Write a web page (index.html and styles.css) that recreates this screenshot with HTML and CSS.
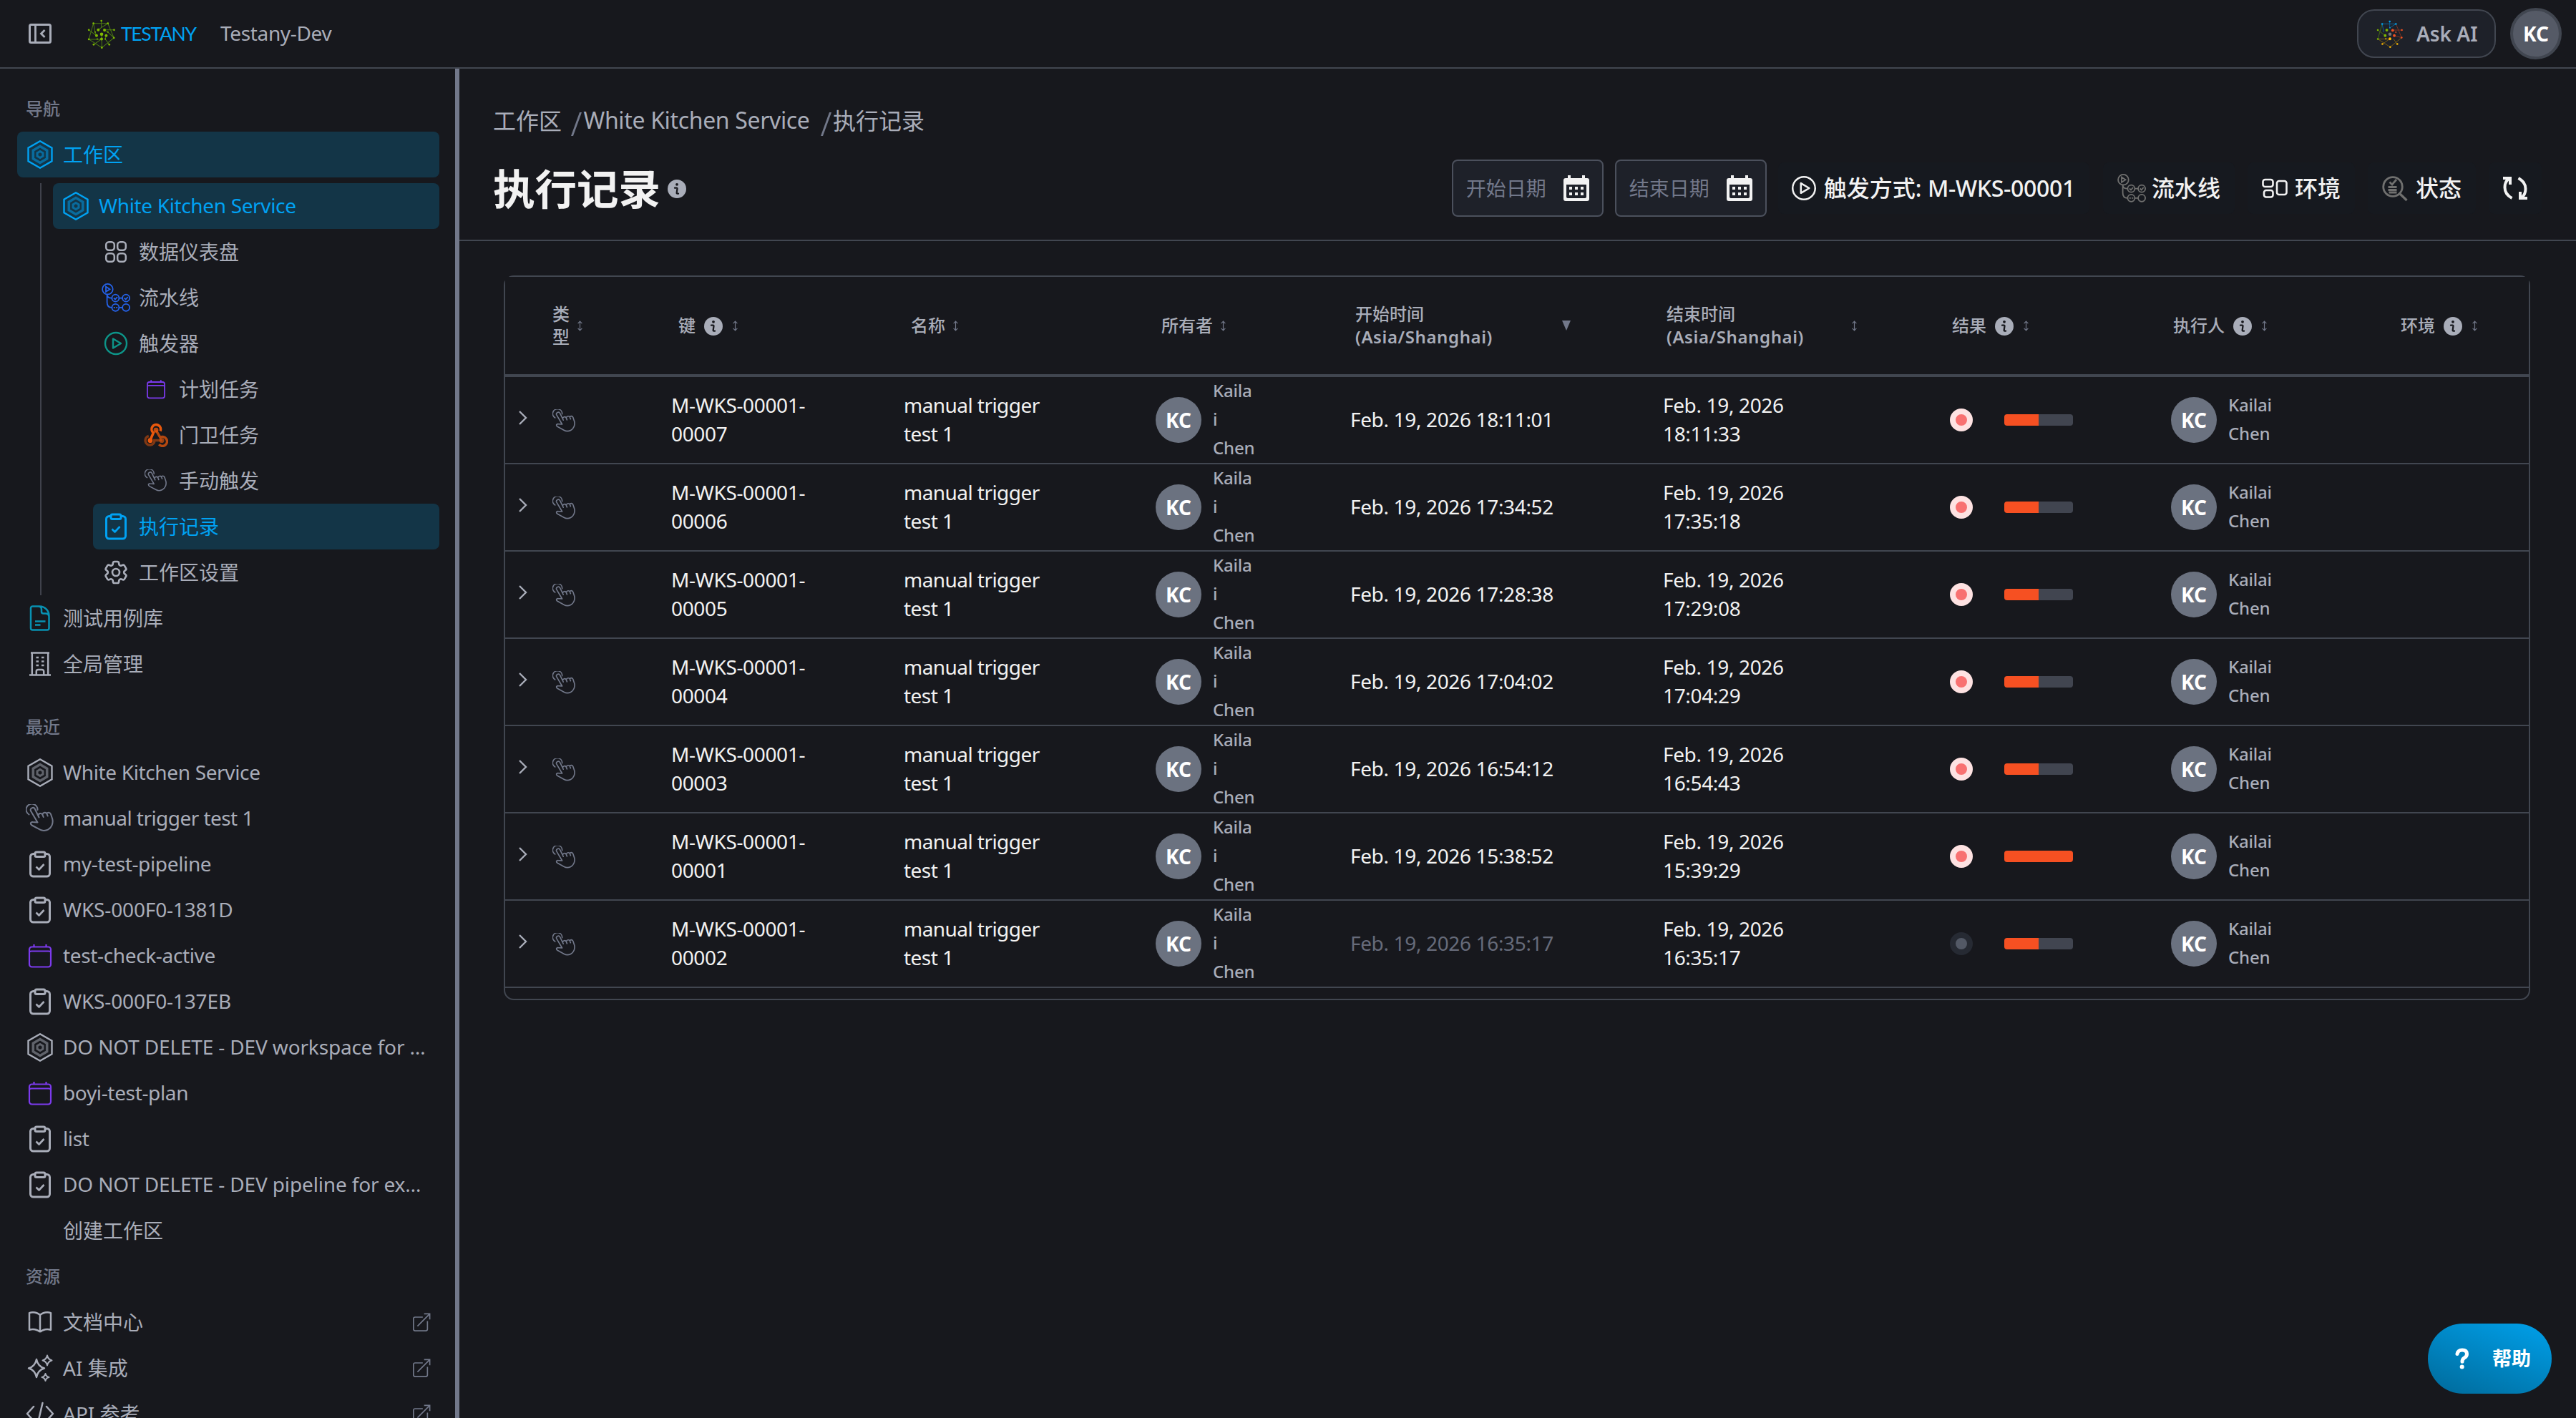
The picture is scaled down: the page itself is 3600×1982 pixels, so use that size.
FILE: index.html
```html
<!DOCTYPE html>
<html lang="zh-CN">
<head>
<meta charset="utf-8">
<title>执行记录 - Testany</title>
<link rel="stylesheet" href="styles.css">
</head>
<body>
<svg class="sprite" aria-hidden="true">
  <symbol id="hex" viewBox="0 0 40 40"><path d="M20 1.300 36.500 10.600v18.800L20 38.700 3.500 29.400V10.600z" fill="none" stroke="currentColor" stroke-width="2.400"/><path d="M20 8.500 29.700 14.200v11.600L20 31.500l-9.700-5.700V14.200z" fill="none" stroke="currentColor" stroke-width="3.600" opacity=".5"/><path d="M20 15.500l4 2.400v4.200l-4 2.400-4-2.400v-4.200z" fill="none" stroke="currentColor" stroke-width="3" opacity=".5"/></symbol>
  <symbol id="hand" viewBox="0 0 40 40"><path d="M4.500 14.500A8 8 0 1 1 16.500 8M16.500 25.500 7 9.500a3.200 3.200 0 0 1 5.800-2.700l5.700 11.700M17.500 16c0-3 4.500-4.500 6-1l1.200 3M23.500 14.500c.5-3 5-4 6.200-.5l1 2.500M29.500 13.200c1-2.200 4.500-2.200 5.500.8l2.200 6.500c1.500 6-1 12.500-6.200 15.200-3 1.500-8 1.800-11 0L8.500 29.500c-3-2.500-1.500-5 1.500-4.500l6.500.5" fill="none" stroke="currentColor" stroke-width="2" stroke-linecap="round" stroke-linejoin="round"/></symbol>
  <symbol id="clip" viewBox="0 0 40 40"><g fill="none" stroke="currentColor" stroke-width="3" stroke-linejoin="round"><path d="M13 5.500h-2.500a4 4 0 0 0-4 4v23.500a4 4 0 0 0 4 4h19a4 4 0 0 0 4-4V9.500a4 4 0 0 0-4-4H27"/><rect x="13" y="3" width="14" height="6.500" rx="2"/><path d="m14.500 23.500 4 4 7-7.500" stroke-width="2.600"/></g></symbol>
  <symbol id="cal" viewBox="0 0 40 40"><path d="M8.500 7.500h23a3.500 3.500 0 0 1 3.500 3.500v21a3.500 3.500 0 0 1-3.500 3.500h-23A3.500 3.500 0 0 1 5 32V11a3.500 3.500 0 0 1 3.500-3.500zM5 15c0-1 1-1.500 3-1.500h24c2 0 3 .5 3 1.500M11.500 7.500v-3.500M28.500 7.500v-3.500" fill="none" stroke="currentColor" stroke-width="2.200"/></symbol>
  <symbol id="grid" viewBox="0 0 40 40"><g fill="none" stroke="currentColor" stroke-width="2.500"><rect x="6.200" y="6.200" width="11.600" height="11.600" rx="4"/><rect x="22.200" y="6.200" width="11.600" height="11.600" rx="4"/><rect x="6.200" y="22.200" width="11.600" height="11.600" rx="4"/><rect x="22.200" y="22.200" width="11.600" height="11.600" rx="4"/></g></symbol>
  <symbol id="pipe" viewBox="0 0 40 40"><g fill="none" stroke="currentColor" stroke-width="1.800"><circle cx="8.400" cy="8.200" r="7.300"/><path d="M6 4.600v7.200l5.500-3.600zM7.600 15.500v11q0 7.300 6.400 7.300M7.600 16.500q1 4.200 6.400 4.200M24.700 20.700h4.600M24.700 33.800h4.600" /><circle cx="19.400" cy="20.700" r="5"/><circle cx="34.100" cy="20.700" r="5"/><circle cx="19.400" cy="33.800" r="5"/><circle cx="34.100" cy="33.800" r="5"/><path d="m17 20.500 2 2 3-3.500M31.700 20.500l2 2 3-3.500M16.800 33.800h2M20.200 33.800h2"/></g></symbol>
  <symbol id="play" viewBox="0 0 40 40"><g fill="none" stroke="currentColor" stroke-width="2.400" stroke-linejoin="round"><circle cx="20" cy="20" r="15"/><path d="M16 13.500v13L27 20z"/></g></symbol>
  <symbol id="hook" viewBox="0 0 40 40"><g fill="none" stroke="currentColor" stroke-width="4.200"><path d="M27.200 13.500a7.500 7.500 0 1 0-11.500 3l-5 11.500"/><path d="M20 12.500 27 24a7.500 7.500 0 1 1-2 11.500" opacity=".75"/><path d="M30 28.800H17.500a7.500 7.500 0 1 1-9.500-7" opacity=".5"/></g><g fill="currentColor"><circle cx="20" cy="12" r="4" opacity=".8"/><circle cx="10.500" cy="29" r="4"/><circle cx="29.500" cy="29" r="4" opacity=".6"/></g></symbol>
  <symbol id="gear" viewBox="0 0 24 24"><g fill="none" stroke="currentColor" stroke-width="1.600" stroke-linejoin="round"><path d="M9.594 3.940c.09-.542.560-.940 1.110-.940h2.593c.55 0 1.020.398 1.110.940l.213 1.281c.063.374.313.686.645.870.074.040.147.083.220.127.325.196.720.257 1.075.124l1.217-.456a1.125 1.125 0 0 1 1.370.490l1.296 2.247a1.125 1.125 0 0 1-.260 1.431l-1.003.827c-.293.241-.438.613-.430.992a7.723 7.723 0 0 1 0 .255c-.008.378.137.750.430.991l1.004.827c.424.350.534.955.260 1.430l-1.298 2.247a1.125 1.125 0 0 1-1.369.491l-1.217-.456c-.355-.133-.750-.072-1.076.124a6.470 6.470 0 0 1-.220.128c-.331.183-.581.495-.644.869l-.213 1.281c-.090.543-.560.940-1.110.940h-2.594c-.550 0-1.019-.398-1.110-.940l-.213-1.281c-.062-.374-.312-.686-.644-.870a6.520 6.520 0 0 1-.220-.127c-.325-.196-.720-.257-1.076-.124l-1.217.456a1.125 1.125 0 0 1-1.369-.490l-1.297-2.247a1.125 1.125 0 0 1 .260-1.431l1.004-.827c.292-.240.437-.613.430-.991a6.932 6.932 0 0 1 0-.255c.007-.380-.138-.751-.430-.992l-1.004-.827a1.125 1.125 0 0 1-.260-1.430l1.297-2.247a1.125 1.125 0 0 1 1.370-.491l1.216.456c.356.133.751.072 1.076-.124.072-.044.146-.086.220-.128.332-.183.582-.495.644-.869z"/><circle cx="12" cy="12" r="3"/></g></symbol>
  <symbol id="doc" viewBox="0 0 40 40"><g fill="none" stroke="currentColor" stroke-width="2.500" stroke-linejoin="round"><path d="M9.500 3.500h9.500c9 0 13.500 7 13.500 13.500v17a2.500 2.500 0 0 1-2.500 2.500H9.500A2.500 2.500 0 0 1 7 34V6a2.500 2.500 0 0 1 2.500-2.500zM17.500 3.500c3.500 0 4.500 1.500 4.500 4.500v3q0 2.500 2.500 2.500h3c3 0 4.500 1 5 4"/><path d="M13 24.500h14.500M13 29.500h7.500"/></g></symbol>
  <symbol id="build" viewBox="0 0 40 40"><g fill="none" stroke="currentColor" stroke-width="2.500"><path d="M7 4.500h26M8.800 4.500v31M31.200 4.500v31M5 35.500h30M14.800 35v-4.500a2.500 2.500 0 0 1 2.500-2.500h5.400a2.500 2.500 0 0 1 2.500 2.500V35"/><path d="M14.500 11h3.500M22 11h3.500M14.500 16.500h3.500M22 16.500h3.500M14.500 22h3.500M22 22h3.500"/></g></symbol>
  <symbol id="book" viewBox="0 0 24 24"><path d="M12 6.042A8.967 8.967 0 0 0 6 3.750c-1.052 0-2.062.180-3 .512v14.250A8.987 8.987 0 0 1 6 18c2.305 0 4.408.867 6 2.292m0-14.250a8.966 8.966 0 0 1 6-2.292c1.052 0 2.062.180 3 .512v14.250A8.987 8.987 0 0 0 18 18a8.967 8.967 0 0 0-6 2.292m0-14.250v14.250" fill="none" stroke="currentColor" stroke-width="1.500" stroke-linejoin="round"/></symbol>
  <symbol id="spark" viewBox="0 0 40 40"><g fill="none" stroke="currentColor" stroke-width="2.400" stroke-linejoin="round"><path d="M15 8q2 10 11 12.500Q17 23 15 33q-2-10-11-12.500Q13 18 15 8z"/><path d="M30 2.500q1 5.500 6.500 7-5.500 1.500-6.500 7-1-5.500-6.500-7 5.500-1.500 6.500-7zM27.500 28q.8 4 5 5-4.200 1-5 5-.8-4-5-5 4.200-1 5-5z" stroke-width="2"/></g></symbol>
  <symbol id="code" viewBox="0 0 40 40"><path d="M11 10 2 20l9 10M29 10l9 10-9 10M23.500 5l-7 30" fill="none" stroke="currentColor" stroke-width="2.500" stroke-linecap="round" stroke-linejoin="round"/></symbol>
  <symbol id="ext" viewBox="0 0 28 28"><path d="M16 6.500H4.500A2.500 2.500 0 0 0 2 9v15.500A2.500 2.500 0 0 0 4.500 27h16a2.500 2.500 0 0 0 2.500-2.500V12.500M8 20 26.500 1.500M18 1.500h8.500V10" fill="none" stroke="currentColor" stroke-width="1.800"/></symbol>
  <symbol id="info" viewBox="0 0 26 26"><circle cx="13" cy="13" r="13" fill="currentColor"/><circle cx="13" cy="6.800" r="1.900" fill="#17181d"/><path d="M10 11.700h2.600q1 0 .9 1l-.8 5.600q-.2 1.400 1 1.400h1.300" fill="none" stroke="#17181d" stroke-width="2.300" stroke-linecap="round"/></symbol>
  <symbol id="sort" viewBox="0 0 10 16"><path d="M5 1.200v13.600M1.800 4.200 5 1l3.200 3.200M1.800 11.800 5 15l3.200-3.200" fill="none" stroke="currentColor" stroke-width="1.300"/></symbol>
  <symbol id="chev" viewBox="0 0 14 22"><path d="m2 2 9 9-9 9" fill="none" stroke="currentColor" stroke-width="2.400"/></symbol>
  <symbol id="calfill" viewBox="0 0 36 36"><path fill="currentColor" fill-rule="evenodd" d="M6 0h4v4h16V0h4v4h3q3 0 3 3v26q0 3-3 3H3q-3 0-3-3V7q0-3 3-3h3zM4 13v17q0 2 2 2h24q2 0 2-2V13z"/><path fill="currentColor" d="M8 16h4v4H8zM16 16h4v4h-4zM24 16h4v4h-4zM8 24h4v4H8zM16 24h4v4h-4zM24 24h4v4h-4z"/></symbol>
</svg>

<header class="topbar">
  <svg class="toggle" viewBox="0 0 32 28"><rect x="1.500" y="1.500" width="29" height="25" rx="2" fill="none" stroke="currentColor" stroke-width="3"/><path d="M9.500 2v24M22.500 9l-5 5 5 5" fill="none" stroke="currentColor" stroke-width="2.800"/></svg>
  <svg class="mark" viewBox="-2 -2 112 122"><g fill="none" stroke="#4c7a14" stroke-width="3"><path d="M20 15h60l25 60-50 41L1 81zM53 4v28l-13 10M20 15l7 36 6 15M80 15 54 32M1 42l32 24M106 42H66M105 75 80 51 66 43M1 81h53M21 103l33-23M86 103 69 80 73 66M55 116l-1-56"/></g><g fill="#7fba00"><circle cx="53" cy="4" r="4"/><circle cx="20" cy="15" r="4"/><circle cx="80" cy="15" r="4"/><circle cx="1" cy="42" r="4"/><circle cx="106" cy="42" r="4"/><circle cx="1" cy="81" r="4"/><circle cx="105" cy="75" r="4"/><circle cx="21" cy="103" r="4"/><circle cx="86" cy="103" r="4"/><circle cx="55" cy="116" r="4"/><circle cx="40" cy="42" r="6"/><circle cx="66" cy="43" r="6"/><circle cx="54" cy="60" r="7"/><circle cx="33" cy="66" r="6"/><circle cx="73" cy="66" r="6"/><circle cx="54" cy="80" r="6"/><circle cx="27" cy="51" r="3"/><circle cx="80" cy="51" r="3"/><circle cx="36" cy="80" r="3"/><circle cx="69" cy="80" r="3"/></g></svg>
  <span class="brand">TESTANY</span>
  <span class="org en">Testany-Dev</span>
  <button class="ask"><svg class="askmark" viewBox="-2 -2 112 122"><g fill="none" stroke-width="2.500"><path d="M80 15H20l7 36M53 4v28L80 15" stroke="#0a6fa8"/><path d="M80 15l25 60-32-9M106 42H66" stroke="#93391f"/><path d="M105 75 55 116 1 81h53M21 103l33-23M86 103 69 80" stroke="#8a6a10"/><path d="M1 81l19-66M1 42l32 24" stroke="#4c7a14"/></g><g fill="#00a4ef"><circle cx="53" cy="4" r="4"/><circle cx="20" cy="15" r="4"/><circle cx="80" cy="15" r="4"/><circle cx="54" cy="32" r="3"/></g><g fill="#7fba00"><circle cx="1" cy="42" r="4"/><circle cx="1" cy="81" r="4"/><circle cx="40" cy="42" r="6"/><circle cx="33" cy="66" r="6"/></g><g fill="#f25022"><circle cx="106" cy="42" r="4"/><circle cx="105" cy="75" r="4"/><circle cx="66" cy="43" r="6"/><circle cx="73" cy="66" r="6"/><circle cx="80" cy="51" r="3"/></g><g fill="#ffb900"><circle cx="21" cy="103" r="4"/><circle cx="86" cy="103" r="4"/><circle cx="55" cy="116" r="4"/><circle cx="54" cy="80" r="6"/><circle cx="36" cy="80" r="3"/></g><circle cx="54" cy="60" r="7" fill="#737373"/></svg><span>Ask AI</span></button>
  <span class="me">KC</span>
</header>

<div class="layout">
<nav class="sidebar">
  <h2>导航</h2>
  <a class="item on"><svg><use href="#hex"/></svg><span>工作区</span></a>
  <div class="tree">
    <a class="item on"><svg><use href="#hex"/></svg><span class="en">White Kitchen Service</span></a>
    <div class="sub">
      <a class="item"><svg><use href="#grid"/></svg><span>数据仪表盘</span></a>
      <a class="item"><svg class="blue"><use href="#pipe"/></svg><span>流水线</span></a>
      <a class="item"><svg class="green"><use href="#play"/></svg><span>触发器</span></a>
      <div class="sub">
        <a class="item"><svg class="purple i32"><use href="#cal"/></svg><span>计划任务</span></a>
        <a class="item"><svg class="orange i34"><use href="#hook"/></svg><span>门卫任务</span></a>
        <a class="item"><svg class="dim i32"><use href="#hand"/></svg><span>手动触发</span></a>
      </div>
      <a class="item on"><svg><use href="#clip"/></svg><span>执行记录</span></a>
      <a class="item"><svg><use href="#gear"/></svg><span>工作区设置</span></a>
    </div>
  </div>
  <a class="item"><svg class="teal"><use href="#doc"/></svg><span>测试用例库</span></a>
  <a class="item"><svg><use href="#build"/></svg><span>全局管理</span></a>

  <h2 class="spaced">最近</h2>
  <a class="item"><svg><use href="#hex"/></svg><span class="en">White Kitchen Service</span></a>
  <a class="item"><svg class="dim"><use href="#hand"/></svg><span class="en tight">manual trigger test 1</span></a>
  <a class="item"><svg><use href="#clip"/></svg><span class="en">my-test-pipeline</span></a>
  <a class="item"><svg><use href="#clip"/></svg><span class="en wide">WKS-000F0-1381D</span></a>
  <a class="item"><svg class="purple"><use href="#cal"/></svg><span class="en">test-check-active</span></a>
  <a class="item"><svg><use href="#clip"/></svg><span class="en wide">WKS-000F0-137EB</span></a>
  <a class="item"><svg><use href="#hex"/></svg><span class="en wide">DO NOT DELETE - DEV workspace for …</span></a>
  <a class="item"><svg class="purple"><use href="#cal"/></svg><span class="en">boyi-test-plan</span></a>
  <a class="item"><svg><use href="#clip"/></svg><span class="en">list</span></a>
  <a class="item"><svg><use href="#clip"/></svg><span class="en wide">DO NOT DELETE - DEV pipeline for ex…</span></a>
  <a class="item"><svg></svg><span>创建工作区</span></a>

  <h2>资源</h2>
  <a class="item"><svg><use href="#book"/></svg><span>文档中心</span><svg class="ext"><use href="#ext"/></svg></a>
  <a class="item"><svg><use href="#spark"/></svg><span>AI 集成</span><svg class="ext"><use href="#ext"/></svg></a>
  <a class="item"><svg><use href="#code"/></svg><span>API 参考</span><svg class="ext"><use href="#ext"/></svg></a>
</nav>
<div class="resizer"></div>

<main>
  <div class="pagehead">
    <div class="crumbs"><a>工作区</a><i></i><a class="en">White Kitchen Service</a><i></i><a>执行记录</a></div>
    <div class="titlerow">
      <h1>执行记录</h1><svg class="info"><use href="#info"/></svg>
      <div class="tools">
        <div class="date"><span>开始日期</span><svg><use href="#calfill"/></svg></div>
        <div class="date"><span>结束日期</span><svg><use href="#calfill"/></svg></div>
        <button class="tool trig"><svg class="t-play"><use href="#play"/></svg><span>触发方式: <b>M-WKS-00001</b></span></button>
        <button class="tool"><svg class="t-pipe"><use href="#pipe"/></svg><span>流水线</span></button>
        <button class="tool"><svg class="t-env" viewBox="0 0 36 28"><g fill="none" stroke="currentColor" stroke-width="2.600"><rect x="1.500" y="2" width="14" height="10" rx="3"/><rect x="3" y="17" width="12.500" height="9.500" rx="3"/><rect x="21" y="4" width="13.500" height="19" rx="3"/></g></svg><span>环境</span></button>
        <button class="tool"><svg class="t-state" viewBox="0 0 36 36"><g fill="none" stroke="currentColor" stroke-width="2.800"><circle cx="15" cy="16" r="13.300"/><path d="m24.500 25.500 10 9.500" stroke-width="3.200"/><path d="m10.500 9.500 3.500 3.500 6-7M8.500 16.500h12M8.500 20.500h12M9.500 24h11"/></g></svg><span>状态</span></button>
        <button class="tool last"><svg class="t-ref" viewBox="0 0 34 32"><g fill="none" stroke="currentColor" stroke-width="4"><path d="M12.500 30Q2.500 24.500 2.500 15q0-8.500 6-12.500"/><path d="M21.500 2q10 5.500 10 15 0 8.500-6 12.500"/><path d="M0 2h10v9M34 30H24v-9"/></g></svg></button>
      </div>
    </div>
  </div>

  <div class="table">
    <div class="row head">
      <div></div>
      <div><span class="narrow">类型</span><svg class="sort"><use href="#sort"/></svg></div>
      <div><span>键</span><svg class="info"><use href="#info"/></svg><svg class="sort"><use href="#sort"/></svg></div>
      <div><span>名称</span><svg class="sort"><use href="#sort"/></svg></div>
      <div><span>所有者</span><svg class="sort"><use href="#sort"/></svg></div>
      <div><span>开始时间<br><b>(Asia/Shanghai)</b></span><svg class="desc" viewBox="0 0 12 14"><path d="M0 0h12L6 14z" fill="currentColor"/></svg></div>
      <div><span>结束时间<br><b>(Asia/Shanghai)</b></span><svg class="sort far"><use href="#sort"/></svg></div>
      <div><span>结果</span><svg class="info"><use href="#info"/></svg><svg class="sort"><use href="#sort"/></svg></div>
      <div><span>执行人</span><svg class="info"><use href="#info"/></svg><svg class="sort"><use href="#sort"/></svg></div>
      <div><span>环境</span><svg class="info"><use href="#info"/></svg><svg class="sort"><use href="#sort"/></svg></div>
    </div>
    <div class="row"><div><svg class="chev"><use href="#chev"/></svg></div><div><svg class="type"><use href="#hand"/></svg></div><div class="en">M-WKS-00001-<br>00007</div><div class="en tight">manual trigger<br>test 1</div><div><span class="av">KC</span><span class="who">Kaila<br>i<br>Chen</span></div><div class="en">Feb. 19, 2026 18:11:01</div><div class="en">Feb. 19, 2026<br>18:11:33</div><div><span class="dot"></span><span class="bar half"></span></div><div><span class="av">KC</span><span class="who">Kailai<br>Chen</span></div><div></div></div>
    <div class="row"><div><svg class="chev"><use href="#chev"/></svg></div><div><svg class="type"><use href="#hand"/></svg></div><div class="en">M-WKS-00001-<br>00006</div><div class="en tight">manual trigger<br>test 1</div><div><span class="av">KC</span><span class="who">Kaila<br>i<br>Chen</span></div><div class="en">Feb. 19, 2026 17:34:52</div><div class="en">Feb. 19, 2026<br>17:35:18</div><div><span class="dot"></span><span class="bar half"></span></div><div><span class="av">KC</span><span class="who">Kailai<br>Chen</span></div><div></div></div>
    <div class="row"><div><svg class="chev"><use href="#chev"/></svg></div><div><svg class="type"><use href="#hand"/></svg></div><div class="en">M-WKS-00001-<br>00005</div><div class="en tight">manual trigger<br>test 1</div><div><span class="av">KC</span><span class="who">Kaila<br>i<br>Chen</span></div><div class="en">Feb. 19, 2026 17:28:38</div><div class="en">Feb. 19, 2026<br>17:29:08</div><div><span class="dot"></span><span class="bar half"></span></div><div><span class="av">KC</span><span class="who">Kailai<br>Chen</span></div><div></div></div>
    <div class="row"><div><svg class="chev"><use href="#chev"/></svg></div><div><svg class="type"><use href="#hand"/></svg></div><div class="en">M-WKS-00001-<br>00004</div><div class="en tight">manual trigger<br>test 1</div><div><span class="av">KC</span><span class="who">Kaila<br>i<br>Chen</span></div><div class="en">Feb. 19, 2026 17:04:02</div><div class="en">Feb. 19, 2026<br>17:04:29</div><div><span class="dot"></span><span class="bar half"></span></div><div><span class="av">KC</span><span class="who">Kailai<br>Chen</span></div><div></div></div>
    <div class="row"><div><svg class="chev"><use href="#chev"/></svg></div><div><svg class="type"><use href="#hand"/></svg></div><div class="en">M-WKS-00001-<br>00003</div><div class="en tight">manual trigger<br>test 1</div><div><span class="av">KC</span><span class="who">Kaila<br>i<br>Chen</span></div><div class="en">Feb. 19, 2026 16:54:12</div><div class="en">Feb. 19, 2026<br>16:54:43</div><div><span class="dot"></span><span class="bar half"></span></div><div><span class="av">KC</span><span class="who">Kailai<br>Chen</span></div><div></div></div>
    <div class="row"><div><svg class="chev"><use href="#chev"/></svg></div><div><svg class="type"><use href="#hand"/></svg></div><div class="en">M-WKS-00001-<br>00001</div><div class="en tight">manual trigger<br>test 1</div><div><span class="av">KC</span><span class="who">Kaila<br>i<br>Chen</span></div><div class="en">Feb. 19, 2026 15:38:52</div><div class="en">Feb. 19, 2026<br>15:39:29</div><div><span class="dot"></span><span class="bar"></span></div><div><span class="av">KC</span><span class="who">Kailai<br>Chen</span></div><div></div></div>
    <div class="row"><div><svg class="chev"><use href="#chev"/></svg></div><div><svg class="type"><use href="#hand"/></svg></div><div class="en">M-WKS-00001-<br>00002</div><div class="en tight">manual trigger<br>test 1</div><div><span class="av">KC</span><span class="who">Kaila<br>i<br>Chen</span></div><div class="en muted">Feb. 19, 2026 16:35:17</div><div class="en">Feb. 19, 2026<br>16:35:17</div><div><span class="dot off"></span><span class="bar half"></span></div><div><span class="av">KC</span><span class="who">Kailai<br>Chen</span></div><div></div></div>
  </div>
</main>
</div>
<button class="help"><svg viewBox="0 0 20 30"><path d="M3 8.500Q4 3 10 3q6.500 0 6.500 5.500 0 3.500-3.800 5.700-2.700 1.600-2.700 5" fill="none" stroke="currentColor" stroke-width="5" stroke-linecap="round"/><circle cx="9.700" cy="26.500" r="3" fill="currentColor"/></svg><span>帮助</span></button>
</body>
</html>
```
FILE: styles.css
```css
* { box-sizing: border-box; }
:root {
  --bg: #17181d;
  --line: #414650;
  --text: #a9adb9;
  --mute: #72788a;
  --bright: #f2f2f2;
  --accent: #00a2f3;
}
body {
  margin: 0;
  width: 3600px;
  height: 1982px;
  overflow: hidden;
  background: var(--bg);
  color: var(--text);
  font: 28px/40px "Noto Sans", "Noto Sans CJK SC", sans-serif;
  display: flex;
  flex-direction: column;
  position: relative;
}
button { font: inherit; color: inherit; border: 0; background: none; padding: 0; }
svg { flex: none; display: block; overflow: visible; }
.sprite { position: absolute; width: 0; height: 0; }
.en { letter-spacing: -0.35px; margin-top: -2px; }
.en.tight { letter-spacing: -0.55px; }
.en.wide { letter-spacing: -0.15px; }

.topbar { height: 96px; flex: none; border-bottom: 2px solid var(--line); display: flex; align-items: center; padding: 0 20px 0 40px; }
.toggle { width: 32px; height: 28px; }
.mark { width: 38px; height: 41px; margin-left: 51px; }
.brand { width: 107px; margin-left: 8px; color: var(--accent); font-family: "Lato", sans-serif; font-size: 26.500px; letter-spacing: -1.300px; }
.org { margin-left: 32px; }
.ask { margin-left: auto; width: 194px; height: 68px; border: 2px solid var(--line); border-radius: 24px; background: #1e2129; display: flex; align-items: center; padding-left: 26px; gap: 19px; font-weight: 600; white-space: nowrap; }
.askmark { width: 36px; height: 39px; }
.me { margin-left: 20px; width: 72px; height: 72px; border-radius: 50%; background: #555a66; border: 4px solid #414650; color: #fff; font-weight: 700; display: grid; place-items: center; }

.layout { flex: 1; min-height: 0; display: flex; }
.sidebar { width: 636px; flex: none; padding: 24px 22px 0 24px; overflow: hidden; }
.sidebar h2 { margin: 0; height: 64px; padding-left: 12px; font-size: 24px; line-height: 63px; font-weight: 500; color: var(--mute); }
.sidebar h2.spaced { margin-top: 24px; }
.item { display: flex; align-items: center; height: 64px; padding: 0 12px; gap: 12px; border-radius: 8px; white-space: nowrap; }
.item > svg { width: 40px; height: 40px; }
.item > svg.i32 { width: 32px; height: 32px; margin: 0 4px; }
.item > svg.i34 { width: 34px; height: 34px; margin: 0 3px; }
.item > svg.ext { width: 26px; height: 28px; margin-left: auto; color: var(--mute); }
.item.on { background: #133547; color: var(--accent); }
.tree { margin: 8px 0 0 32px; padding-left: 16px; border-left: 2px solid #3f414b; }
.sub { padding-left: 56px; }
.blue { color: #2563eb; }
.green { color: #0d9488; }
.purple { color: #7c3aed; }
.orange { color: #ea580c; }
.teal { color: #0891b2; }
.dim { color: var(--mute); }
.resizer { width: 6px; background: var(--mute); }

main { flex: 1; min-width: 0; }
.pagehead { height: 241px; border-bottom: 2px solid var(--line); padding: 49px 68px 0 47px; }
.crumbs { display: flex; font-size: 32px; line-height: 48px; }
.crumbs i { width: 2.500px; height: 33px; background: var(--mute); transform: skewX(-20deg); margin: 12px 9px 0 19px; }
.crumbs .en { margin-top: -1px; }
.crumbs .en + i { margin-left: 21px; }
.titlerow { display: flex; align-items: center; height: 80px; margin-top: 30px; }
h1 { margin: 0; font-size: 58.500px; line-height: 80px; font-weight: 600; color: var(--bright); }
.info { width: 26px; height: 26px; }
h1 + .info { margin-left: 10px; margin-top: 2px; }
.tools { margin-left: auto; display: flex; align-items: center; color: var(--bright); font-size: 32px; }
.date { width: 212px; height: 80px; margin-right: 16px; border: 2px solid #4b505c; border-radius: 8px; background: #1e2129; display: flex; align-items: center; justify-content: space-between; padding: 0 18px; font-size: 28px; color: var(--mute); }
.date svg { width: 36px; height: 36px; color: var(--bright); }
.tool { display: flex; align-items: center; height: 72px; padding: 0 20px; margin-right: 18px; background: #16191f; border-radius: 8px; font-weight: 500; white-space: nowrap; }
.tool b { font-weight: 500; letter-spacing: -0.300px; }
.trig { margin-right: 19px; }
.tool.last { margin-right: -20px; }
.t-play { width: 42px; height: 42px; margin: 0 7px 0 -5px; }
.t-pipe { width: 40px; height: 40px; margin-right: 8px; color: #70706f; }
.t-env { width: 36px; height: 28px; margin-right: 10px; }
.t-state { width: 36px; height: 36px; margin-right: 11px; color: #70706f; }
.t-ref { width: 34px; height: 32px; }

.table { margin: 48px 64px 0 62px; height: 1013px; border: 2px solid var(--line); border-radius: 14px; }
.row { display: grid; grid-template-columns: 66px 166px 325px 352px 272px 437px 401px 309px 320px 1fr; height: 122px; border-bottom: 2px solid var(--line); color: var(--bright); }
.row > div { align-self: center; }
.row > div:has(> svg, > span) { display: flex; align-items: center; }
.head { height: 140px; border-bottom-width: 4px; background: var(--bg); font-size: 24px; line-height: 32px; font-weight: 500; color: var(--text); }
.head b { font-weight: 600; letter-spacing: 0.600px; }
.head > div { padding-left: 10px; }
.head > div:nth-child(2) { padding-left: 0; }
.head > div:nth-child(5) { padding-left: 8px; }
.head > div:nth-child(6) { padding-left: 7px; }
.head > div:nth-child(7) { padding-left: 5px; }
.head > div:nth-child(8), .head > div:nth-child(9) { padding-left: 3px; }
.head > div:nth-child(10) { padding-left: 1px; }
.narrow { width: 24px; white-space: normal; }
.head .info { margin-left: 12px; margin-top: 2px; }
.sort { width: 9px; height: 15px; margin-left: 10px; color: var(--mute); }
.info + .sort { margin-left: 13px; }
.sort.far { margin-left: 66px; }
.desc { width: 12px; height: 14px; margin-left: 97px; color: var(--mute); }
.chev { width: 14px; height: 22px; margin: -6px 0 0 18px; color: var(--text); }
.type { width: 33px; height: 33px; margin-top: 2px; color: var(--mute); }
.av { width: 64px; height: 64px; border-radius: 50%; background: #6b7280; color: #fff; font-weight: 700; display: grid; place-items: center; }
.who { margin: -2px 0 0 16px; font-size: 24px; font-weight: 500; letter-spacing: -0.200px; color: var(--text); }
.muted { color: #666b7a; }
.dot { width: 32px; height: 32px; border-radius: 50%; border: 8px solid #fee2e2; background: #f87171; }
.dot.off { border-color: #262a33; background: #535966; }
.bar { width: 96px; height: 16px; margin-left: 44px; border-radius: 4px; background: #f65022; }
.bar.half { background: linear-gradient(90deg, #f65022 50%, #414550 50%); }

.help { position: absolute; left: 3393px; top: 1850px; width: 173px; height: 98px; border-radius: 49px; background: linear-gradient(20deg, #006a9a, #00a0ea); color: #fff; font-weight: 700; display: flex; align-items: center; padding-left: 38px; font-size: 27px; }
.help svg { width: 20px; height: 30px; margin-right: 32px; }
```
